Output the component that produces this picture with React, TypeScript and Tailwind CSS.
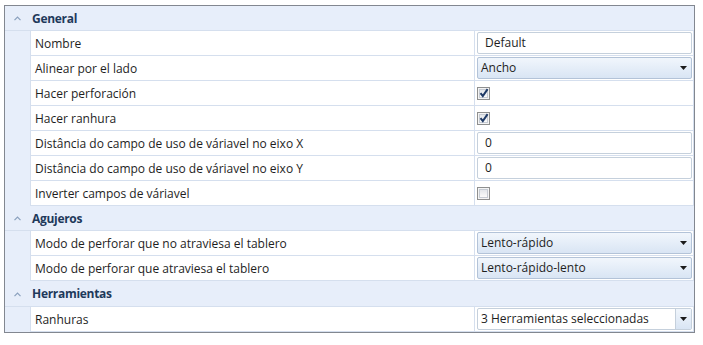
import { ReactNode } from "react";

type Valor =
  | { tipo: "texto"; valor: string }
  | { tipo: "combo"; valor: string }
  | { tipo: "check"; valor: boolean }
  | { tipo: "multi"; valor: string };

interface Fila {
  nombre: string;
  valor: Valor;
}

interface Seccion {
  titulo: string;
  alto: string;
  filas: Fila[];
}

const secciones: Seccion[] = [
  {
    titulo: "General",
    alto: "h-[25px]",
    filas: [
      { nombre: "Nombre", valor: { tipo: "texto", valor: "Default" } },
      { nombre: "Alinear por el lado", valor: { tipo: "combo", valor: "Ancho" } },
      { nombre: "Hacer perforación", valor: { tipo: "check", valor: true } },
      { nombre: "Hacer ranhura", valor: { tipo: "check", valor: true } },
      { nombre: "Distância do campo de uso de váriavel no eixo X", valor: { tipo: "texto", valor: "0" } },
      { nombre: "Distância do campo de uso de váriavel no eixo Y", valor: { tipo: "texto", valor: "0" } },
      { nombre: "Inverter campos de váriavel", valor: { tipo: "check", valor: false } },
    ],
  },
  {
    titulo: "Agujeros",
    alto: "h-[25px]",
    filas: [
      { nombre: "Modo de perforar que no atraviesa el tablero", valor: { tipo: "combo", valor: "Lento-rápido" } },
      { nombre: "Modo de perforar que atraviesa el tablero", valor: { tipo: "combo", valor: "Lento-rápido-lento" } },
    ],
  },
  {
    titulo: "Herramientas",
    alto: "h-[26px]",
    filas: [{ nombre: "Ranhuras", valor: { tipo: "multi", valor: "3 Herramientas seleccionadas" } }],
  },
];

function Triangulo() {
  return (
    <svg width="7" height="4" viewBox="0 0 7 4" className="shrink-0">
      <path d="M0 0 L7 0 L3.5 4 Z" fill="#1b1b1b" />
    </svg>
  );
}

function Chevron() {
  return (
    <svg width="7" height="5" viewBox="0 0 7 5">
      <path d="M0.5 4.2 L3.5 1.2 L6.5 4.2" fill="none" stroke="#8aa0bd" strokeWidth="1.2" />
    </svg>
  );
}

function Casilla({ marcada }: { marcada: boolean }) {
  return (
    <div className="w-[13px] h-[13px] border border-[#8e8f8f] bg-[#f4f4f4] p-[1px]">
      <div className="w-full h-full border border-[#c6cbd3] bg-gradient-to-b from-[#e3e6ea] to-[#fbfbfb] flex items-center justify-center">
        {marcada && (
          <svg width="10" height="10" viewBox="0 0 10 10" className="shrink-0">
            <path d="M1.5 5.2 L3.8 8 L8.6 1.2" fill="none" stroke="#1f3a66" strokeWidth="2" />
          </svg>
        )}
      </div>
    </div>
  );
}

function Editor({ valor }: { valor: Valor }): ReactNode {
  if (valor.tipo === "check") {
    return <Casilla marcada={valor.valor} />;
  }
  if (valor.tipo === "texto") {
    return (
      <div className="h-[22px] w-full border border-[#c5d0dc] rounded-[2px] bg-white flex items-center px-[7px]">
        {valor.valor}
      </div>
    );
  }
  if (valor.tipo === "combo") {
    return (
      <div className="h-[22px] w-full border border-[#b3c3d8] rounded-[2px] bg-gradient-to-b from-[#f1f6fc] to-[#d9e5f4] flex items-center pl-[3px] pr-[4px]">
        <span className="flex-1">{valor.valor}</span>
        <Triangulo />
      </div>
    );
  }
  return (
    <div className="h-[22px] w-full border border-[#c5d0dc] rounded-[2px] bg-white flex items-center">
      <span className="flex-1 pl-[3px]">{valor.valor}</span>
      <div className="h-full w-[16px] border-l border-[#c5d0dc] bg-gradient-to-b from-[#f1f6fc] to-[#d9e5f4] flex items-center justify-center">
        <Triangulo />
      </div>
    </div>
  );
}

export default function App() {
  return (
    <div className="w-[703px] h-[345px] bg-white pl-[4px] pt-[5px] font-['Segoe_UI','Open_Sans',sans-serif] text-[12px] text-[#1e1e1e]">
      <div className="w-[691px] border border-[#828790] bg-[#e7eefa]">
        {secciones.map((s) => (
          <div key={s.titulo}>
            {/* cabecera de la sección */}
            <div className={`${s.alto} flex items-center border-b border-[#d5dfee] pt-[1px]`}>
              <div className="w-[25px] flex justify-center">
                <Chevron />
              </div>
              <span className="font-bold tracking-[-0.3px] text-[#1e395b] pl-[2px]">{s.titulo}</span>
            </div>
            {s.filas.map((f) => (
              <div key={f.nombre} className="h-[25px] flex">
                <div className="w-[25px] shrink-0" />
                <div className="w-[445px] shrink-0 bg-white border-l border-b border-r border-[#d5dfee] flex items-center pl-[4px] pt-[1px]">
                  {f.nombre}
                </div>
                <div className="flex-1 bg-white border-b border-r border-[#d5dfee] flex items-center pl-[2px] pr-[1px]">
                  <Editor valor={f.valor} />
                </div>
              </div>
            ))}
          </div>
        ))}
      </div>
    </div>
  );
}
